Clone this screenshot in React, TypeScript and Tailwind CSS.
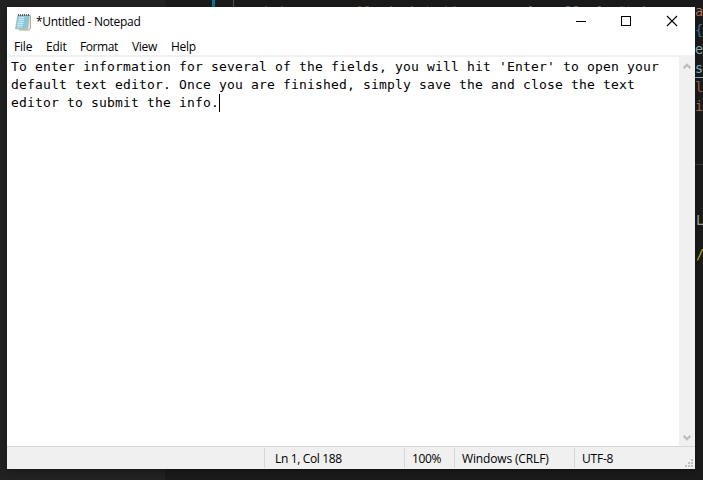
import React from "react";

const ui = "font-['Open_Sans','Noto_Sans',sans-serif]";

const menu = [
  { label: "File", box: "w-[32px]", ls: "tracking-[-0.2px]" },
  { label: "Edit", box: "w-[34px]", ls: "tracking-[-0.2px]" },
  { label: "Format", box: "w-[52px]", ls: "tracking-[-0.4px]" },
  { label: "View", box: "w-[39px]", ls: "tracking-[-0.3px]" },
  { label: "Help", box: "w-[40px]", ls: "tracking-[-0.3px]" },
];

const status = [
  { label: "", box: "w-[257px]", pad: "", ls: "" },
  { label: "Ln 1, Col 188", box: "w-[140px]", pad: "pl-[11px]", ls: "tracking-[-0.35px]" },
  { label: "100%", box: "w-[50px]", pad: "pl-[8px]", ls: "tracking-[-0.4px]" },
  { label: "Windows (CRLF)", box: "w-[120px]", pad: "pl-[8px]", ls: "tracking-[-0.15px]" },
  { label: "UTF-8", box: "flex-1", pad: "pl-[8px]", ls: "tracking-[-0.2px]" },
];

const codeEdge = [
  { text: "a", color: "text-[#b77560]", box: "h-[19px]" },
  { text: "{", color: "text-[#3a78a8]", box: "h-[19px]" },
  { text: "e", color: "text-[#82b7d0]", box: "h-[19px]" },
  { text: "s", color: "text-[#82b7d0] border-b border-[#82b7d0]", box: "h-[19px]" },
  { text: "l", color: "text-[#a5674f]", box: "h-[19px]" },
  { text: "i", color: "text-[#a5674f]", box: "h-[19px]" },
  { text: "", color: "", box: "h-[95px]" },
  { text: "L", color: "text-[#aaa69a] pl-[1px]", box: "h-[34px]" },
  { text: "/", color: "text-[#b8b90c] pl-[1px]", box: "h-[19px]" },
];

// Bottom pixels of the code line that runs under the window's top edge.
const fringe = [
  { gap: "ml-[31px]", w: "w-[2px]", color: "bg-[#6b4a38]" },
  { gap: "ml-[14px]", w: "w-[2px]", color: "bg-[#6b4a38]" },
  { gap: "ml-[75px]", w: "w-[3px]", color: "bg-[#6b4a38]" },
  { gap: "ml-[4px]", w: "w-[4px]", color: "bg-[#6b4a38]" },
  { gap: "ml-[21px]", w: "w-[2px]", color: "bg-[#6b4a38]" },
  { gap: "ml-[19px]", w: "w-[2px]", color: "bg-[#6b4a38]" },
  { gap: "ml-[14px]", w: "w-[1px]", color: "bg-[#6b4a38]" },
  { gap: "ml-[17px]", w: "w-[2px]", color: "bg-[#2b4b66]" },
  { gap: "ml-[6px]", w: "w-[3px]", color: "bg-[#2b4b66]" },
  { gap: "ml-[73px]", w: "w-[3px]", color: "bg-[#4c6c80]" },
  { gap: "ml-[34px]", w: "w-[4px]", color: "bg-[#4c6c80]" },
  { gap: "ml-[4px]", w: "w-[4px]", color: "bg-[#4c6c80]" },
  { gap: "ml-[20px]", w: "w-[3px]", color: "bg-[#4c6c80]" },
  { gap: "ml-[19px]", w: "w-[3px]", color: "bg-[#2b4b66]" },
  { gap: "ml-[5px]", w: "w-[1px]", color: "bg-[#6b4a38]" },
  { gap: "ml-[14px]", w: "w-[2px]", color: "bg-[#6b4a38]" },
];

function NotepadIcon() {
  return (
    <svg width="16" height="18" viewBox="0 0 16 18">
      <path d="M4 2.5H15.4V15.5L14 17H4" fill="#f6eedd" stroke="#a8956f" strokeWidth=".9" />
      <path d="M2.8 2.5H14L12.7 15.8H.5Z" fill="#8ecbdc" stroke="#6faebf" strokeWidth=".6" />
      <path d="M3.8 4H9.5L7.5 14.5H1.8Z" fill="#c5e6ed" />
      <path d="M3.3 5.5H13M3 7.5H12.8M2.7 9.5H12.6M2.4 11.5H12.4M2 13.5H12" stroke="#7db9ca" strokeWidth=".5" />
      <path d="M3.5 1V3M5.5 1V3M7.5 1V3M9.5 1V3M11.5 1V3M13.5 1V3" stroke="#49545a" strokeWidth=".9" />
    </svg>
  );
}

function Chevron({ down = false }: { down?: boolean }) {
  return (
    <svg width="8" height="6" viewBox="0 0 8 6" className={down ? "rotate-180" : ""}>
      <path d="M.6 5.2L4 1.8L7.4 5.2" fill="none" stroke="#bcbcbc" strokeWidth="2.2" />
    </svg>
  );
}

export default function App() {
  return (
    <div className="relative flex h-[480px] w-[703px] overflow-hidden bg-[#1b1b1b]">
      <div className="h-full w-[165px] bg-[#222222]" />
      <div className="ml-[47px] h-[7px] w-[3px] bg-[#0b7394]" />
      <div className="ml-[18px] h-[7px] w-px bg-[#555555]" />
      <div className="flex h-px pt-0 mt-[6px]">
        {fringe.map((f, i) => (
          <span key={i} className={`${f.gap} ${f.w} ${f.color} h-px`} />
        ))}
      </div>
      <div className="ml-auto w-[8px] overflow-hidden pt-[2px] font-['DejaVu_Sans_Mono',monospace] text-[13.5px] leading-[19px]">
        {codeEdge.map((c, i) => (
          <div key={i} className={`${c.box} ${c.color}`}>
            {c.text || <div className="h-[49px] border-b border-[#3b3b3b]" />}
          </div>
        ))}
      </div>

      <div className="absolute left-[7px] top-[7px] flex h-[462px] w-[688px] flex-col bg-white text-black shadow-[0_2px_8px_rgba(0,0,0,0.35)]">
        <div className="flex h-[29px] items-center pl-[8px]">
          <NotepadIcon />
          <span className={`${ui} ml-[5px] text-[12px] leading-[16px] tracking-[-0.3px] whitespace-nowrap`}>*Untitled - Notepad</span>
          <svg className="ml-auto mr-[7px]" width="119" height="29" viewBox="0 0 119 29" fill="none" stroke="#000" shapeRendering="crispEdges">
            <path d="M7 14.5H17M52.5 9.5H61.5V18.5H52.5Z" />
            <path d="M98 9L108 19M108 9L98 19" shapeRendering="auto" strokeWidth="1.1" />
          </svg>
        </div>
        <div className={`${ui} flex h-[19px] items-center pl-[7px] pt-[2px] text-[12px] leading-[16px]`}>
          {menu.map((m) => (
            <span key={m.label} className={`${m.box} ${m.ls} whitespace-nowrap`}>{m.label}</span>
          ))}
        </div>
        <div className="h-[2px] bg-[#f0f0f0]" />
        <div className="flex min-h-0 flex-1">
          <div className="flex-1 pl-[4px] pt-px font-['DejaVu_Sans_Mono',monospace] text-[13px] leading-[18px] tracking-[0.174px] whitespace-pre">
            <p>To enter information for several of the fields, you will hit 'Enter' to open your</p>
            <p>default text editor. Once you are finished, simply save the and close the text</p>
            <p className="flex">editor to submit the info.<span className="h-[18px] w-px bg-black" /></p>
          </div>
          <div className="flex w-[16px] flex-col items-center justify-between bg-[#f0f0f0] pb-[5px] pl-0 pr-px pt-[6px]">
            <Chevron />
            <Chevron down />
          </div>
        </div>
        <div className={`${ui} flex h-[23px] border-t border-[#d7d7d7] bg-[#f0f0f0] text-[12px] leading-[24px]`}>
          {status.map((s, i) => (
            <div key={i} className={`${s.box} ${s.pad} ${s.ls} relative whitespace-nowrap`}>
              {s.label}
              {i < 4 && <span className="absolute right-[-1px] top-px h-[20px] w-px bg-[#d7d7d7]" />}
            </div>
          ))}
          <svg width="11" height="22" viewBox="0 0 11 22" fill="#bfbfbf" shapeRendering="crispEdges">
            <path d="M7 12h2v2H7zM4 15h2v2H4zM7 15h2v2H7zM1 18h2v2H1zM4 18h2v2H4zM7 18h2v2H7z" />
          </svg>
        </div>
      </div>
    </div>
  );
}
